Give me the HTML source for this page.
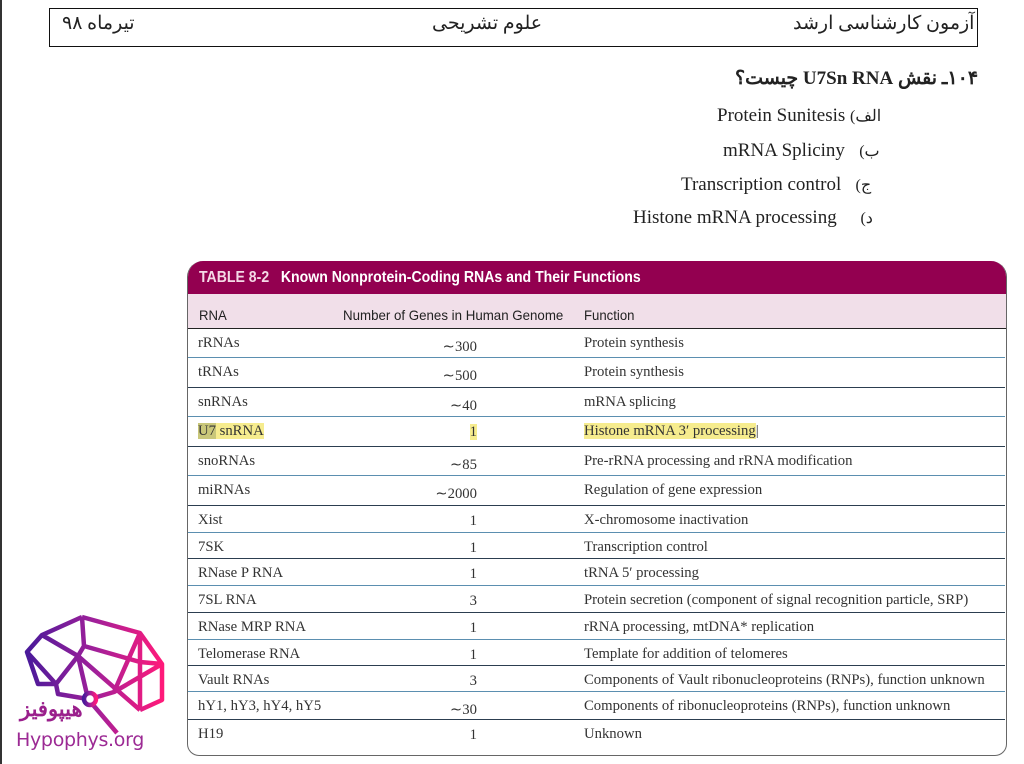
<!DOCTYPE html>
<html><head><meta charset="utf-8"><style>
html,body{margin:0;padding:0;background:#fff;}
body{width:1024px;height:764px;position:relative;overflow:hidden;font-family:"Liberation Serif",serif;color:#222;}
.a{position:absolute;white-space:nowrap;}
.fa{font-family:"Liberation Serif","Noto Sans CJK SC",serif;}
.t{font-size:14.7px;color:#333;}
.hl{background:#f6ec8e;}
.n{font-family:"Liberation Sans",sans-serif;transform-origin:0 0;}
</style></head><body>
<div class="a" style="left:0;top:0;width:2px;height:764px;background:#333"></div>
<div class="a" style="left:49px;top:8px;width:927px;height:37px;border:1.5px solid #111"></div>
<div class="a fa" style="left:62px;top:12px;font-size:19px" dir="rtl">تیرماه ۹۸</div>
<div class="a fa" style="left:432px;top:12px;font-size:19px" dir="rtl">علوم تشریحی</div>
<div class="a fa" style="left:793px;top:12px;font-size:19px" dir="rtl">آزمون کارشناسی ارشد</div>
<div class="a fa" style="left:735px;top:67px;font-size:19px;font-weight:bold" dir="rtl">۱۰۴ـ نقش U7Sn RNA چیست؟</div>
<div class="a fa" style="left:717px;top:105px;font-size:19px">Protein Sunitesis <span style="font-size:16px">(الف</span></div>
<div class="a fa" style="left:723px;top:140px;font-size:19px">mRNA Spliciny &nbsp;&nbsp;<span style="font-size:16px">(ب</span></div>
<div class="a fa" style="left:681px;top:174px;font-size:19px">Transcription control &nbsp;&nbsp;<span style="font-size:16px">(ج</span></div>
<div class="a fa" style="left:633px;top:207px;font-size:19px">Histone mRNA processing &nbsp;&nbsp;&nbsp;&nbsp;<span style="font-size:16px">(د</span></div>

<div class="a" style="left:187px;top:261px;width:818px;height:494px;border:1px solid #666;border-top:none;border-radius:16px 16px 12px 12px;overflow:hidden">
<div style="position:absolute;left:0;top:0;width:818px;height:33px;background:#930050"></div>
<div style="position:absolute;left:0;top:33px;width:818px;height:34px;background:#f1dfe9;border-bottom:1px solid #222"></div>
</div>
<div class="a n" style="left:199px;top:269px;font-weight:bold;font-size:16px;color:#f4d9e6;transform:scaleX(0.88)">TABLE 8-2 &nbsp;&nbsp;<span style="color:#fff">Known Nonprotein-Coding RNAs and Their Functions</span></div>
<div class="a n" style="left:199px;top:307px;font-size:14px;color:#222;transform:scaleX(0.94)">RNA</div>
<div class="a n" style="left:343px;top:307px;font-size:14px;color:#222;transform:scaleX(0.95)">Number of Genes in Human Genome</div>
<div class="a n" style="left:584px;top:307px;font-size:14px;color:#222;transform:scaleX(0.94)">Function</div>

<div id="rows"></div>
<script>
var r=[["rRNAs","~300","Protein synthesis"],["tRNAs","~500","Protein synthesis"],["snRNAs","~40","mRNA splicing"],["U7 snRNA","1","Histone mRNA 3′ processing"],["snoRNAs","~85","Pre-rRNA processing and rRNA modification"],["miRNAs","~2000","Regulation of gene expression"],["Xist","1","X-chromosome inactivation"],["7SK","1","Transcription control"],["RNase P RNA","1","tRNA 5′ processing"],["7SL RNA","3","Protein secretion (component of signal recognition particle, SRP)"],["RNase MRP RNA","1","rRNA processing, mtDNA* replication"],["Telomerase RNA","1","Template for addition of telomeres"],["Vault RNAs","3","Components of Vault ribonucleoproteins (RNPs), function unknown"],["hY1, hY3, hY4, hY5","~30","Components of ribonucleoproteins (RNPs), function unknown"],["H19","1","Unknown"]];
var y=[328,357,387,416,446,475,505,532,558,585,612,639,665,691,719,756];
var h="";
for(var i=0;i<r.length;i++){var t=y[i];
if(i>0)h+='<div class="a" style="left:188px;top:'+t+'px;width:817px;height:1px;background:'+(i%2?'#5b8fb0':'#2c3e50')+'"></div>';
var hl=i==3;
h+='<div class="a t" style="left:198px;top:'+(t+7)+'px">'+(hl?'<span class="hl"><span style="background:#c9c77a">U7</span> snRNA</span>':r[i][0])+'</div>';
var n=r[i][1].replace("~","∼");var ny=n.length>1?t+10:t+8;
h+='<div class="a t" style="left:380px;width:97px;text-align:right;top:'+ny+'px">'+(hl?'<span class="hl">1</span>':n)+'</div>';
h+='<div class="a t" style="left:584px;top:'+(t+7)+'px">'+(hl?'<span class="hl">'+r[i][2]+'</span>|':r[i][2])+'</div>';}
document.getElementById("rows").innerHTML=h;
</script>

<svg class="a" style="left:15px;top:610px" width="160" height="130" viewBox="15 610 160 130">
<defs><linearGradient id="g" x1="0" x2="1" y1="0" y2="0"><stop offset="0" stop-color="#4a1a9a"/><stop offset="0.5" stop-color="#a0209a"/><stop offset="1" stop-color="#ff1a7a"/></linearGradient></defs>
<g fill="none" stroke="url(#g)" stroke-width="4.5" stroke-linejoin="round">
<path d="M82 617 L140 633 L162 664 L162 700 L140 710 M82 617 L42 635 L27 652 L38 684 L56 684 L58 694 L88 699 M42 635 L78 656 L88 699 M82 617 L84 646 L78 656 M84 646 L140 662 L162 664 M140 633 L140 710 M140 633 L114 692 L90 699 M88 699 L117 733 M78 656 L140 710 M56 684 L78 656 M114 692 L162 664 M27 652 L56 684"/>
<circle cx="90" cy="699" r="6" fill="#fff"/>
</g></svg>
<div class="a fa" style="left:20px;top:697px;font-size:21px;font-weight:bold;color:#9a1f8c" dir="rtl">هیپوفیز</div>
<div class="a" style="left:16px;top:729px;font-family:'DejaVu Sans',sans-serif;font-size:19px;color:#9c2a94;letter-spacing:-0.3px">Hypophys.org</div>
</body></html>
